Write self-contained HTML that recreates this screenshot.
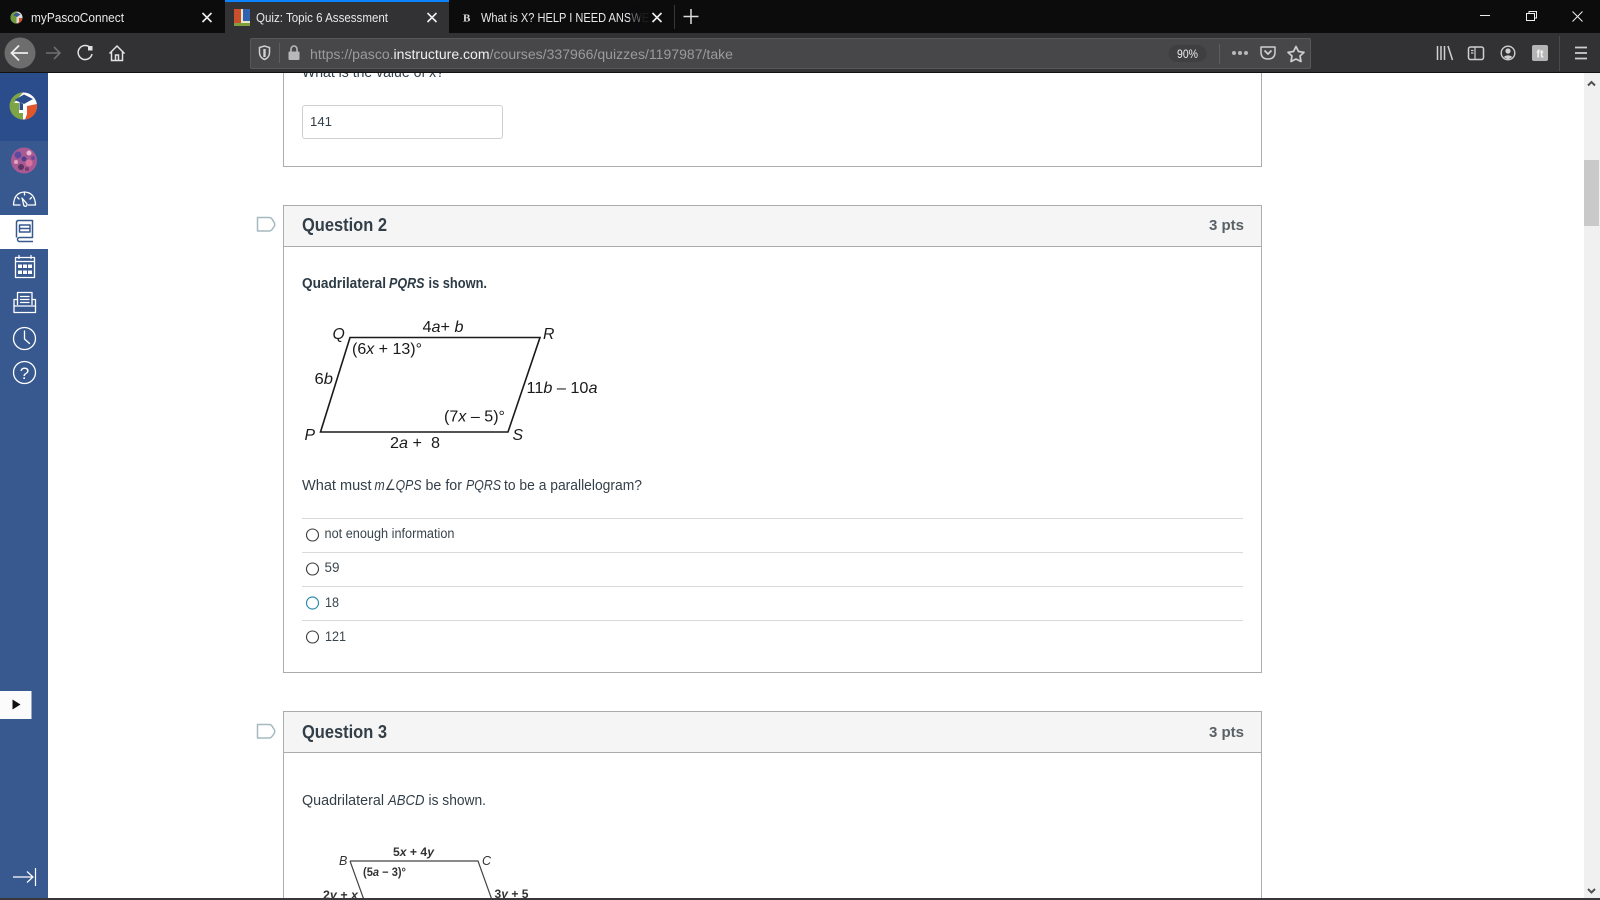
<!DOCTYPE html>
<html lang="en">
<head>
<meta charset="utf-8">
<title>Quiz: Topic 6 Assessment</title>
<style>
html,body{margin:0;padding:0;width:1600px;height:900px;overflow:hidden;background:#fff}
svg{display:block;position:absolute;left:0;top:0}
text{font-family:"Liberation Sans",Arial,sans-serif;white-space:pre}
.b{fill:#333f48;font-size:14.5px}
.bb{fill:#2d3b45;font-size:14.5px;font-weight:bold}
.h{fill:#333f48;font-size:18px;font-weight:bold}
.p{fill:#5a6166;font-size:15px;font-weight:bold}
.o{fill:#3a464e;font-size:13.5px}
.f{fill:#1a1a1a;font-size:15.8px}
.f3{fill:#333;font-size:11.5px}
.t{fill:#e8e8e8;font-size:12.5px}
</style>
</head>
<body>
<svg width="1600" height="900" viewBox="0 0 1600 900" xmlns="http://www.w3.org/2000/svg">
<rect width="1600" height="900" fill="#fff"/>

<!-- Card 1 -->
<text class="b" x="302" y="77" textLength="142" lengthAdjust="spacingAndGlyphs">What is the value of x?</text>
<path d="M283.500 70V166.500H1261.500V70" fill="none" stroke="#a9adb0"/>
<rect x="302.500" y="105.500" width="200" height="33" rx="2.500" fill="#fff" stroke="#cdd1d4"/>
<text class="b" x="310" y="126" textLength="22" lengthAdjust="spacingAndGlyphs" style="font-size:13px">141</text>

<!-- Question 2 -->
<path d="M257.500 217.500H269Q271 217.500 272 219L274.500 223Q275 224.500 274.500 226L272 229.500Q271 231 269 231H257.500Z" fill="#fff" stroke="#a6b8c0" stroke-width="1.500" stroke-linejoin="round"/>
<rect x="283.500" y="205.500" width="978" height="467" fill="#fff" stroke="#a9adb0"/>
<rect x="284" y="206" width="977" height="40.500" fill="#f5f5f5"/>
<path d="M284 246.500H1261" stroke="#a9adb0"/>
<text class="h" x="302" y="231" textLength="85" lengthAdjust="spacingAndGlyphs">Question 2</text>
<text class="p" x="1209" y="230" textLength="35" lengthAdjust="spacingAndGlyphs">3 pts</text>
<text class="bb" x="302" y="288" textLength="84" lengthAdjust="spacingAndGlyphs">Quadrilateral</text>
<text class="bb" x="389" y="288" textLength="35.500" lengthAdjust="spacingAndGlyphs" font-style="italic">PQRS</text>
<text class="bb" x="428.500" y="288" textLength="58.500" lengthAdjust="spacingAndGlyphs">is shown.</text>

<!-- Parallelogram figure -->
<path d="M350 337.500H540L508 432H320.500Z" fill="#fff" stroke="#1a1a1a" stroke-width="1.600"/>
<text class="f" x="332.500" y="339" font-style="italic">Q</text>
<text class="f" x="422.500" y="332" textLength="41" lengthAdjust="spacingAndGlyphs">4<tspan font-style="italic">a</tspan>+ <tspan font-style="italic">b</tspan></text>
<text class="f" x="543" y="339" font-style="italic">R</text>
<text class="f" x="352" y="354" textLength="70" lengthAdjust="spacingAndGlyphs">(6<tspan font-style="italic">x</tspan> + 13)°</text>
<text class="f" x="314.500" y="384" textLength="18.500" lengthAdjust="spacingAndGlyphs">6<tspan font-style="italic">b</tspan></text>
<text class="f" x="526.500" y="393" textLength="71" lengthAdjust="spacingAndGlyphs">11<tspan font-style="italic">b</tspan> – 10<tspan font-style="italic">a</tspan></text>
<text class="f" x="444" y="421.500" textLength="61" lengthAdjust="spacingAndGlyphs">(7<tspan font-style="italic">x</tspan> – 5)°</text>
<text class="f" x="304.500" y="440" font-style="italic">P</text>
<text class="f" x="512.500" y="440" font-style="italic">S</text>
<text class="f" x="390" y="448" textLength="50" lengthAdjust="spacingAndGlyphs">2<tspan font-style="italic">a</tspan> +  8</text>

<text class="b" x="302" y="490" textLength="69.500" lengthAdjust="spacingAndGlyphs">What must</text>
<text class="b" x="374.500" y="490" textLength="47" lengthAdjust="spacingAndGlyphs"><tspan font-style="italic">m</tspan>∠<tspan font-style="italic">QPS</tspan></text>
<text class="b" x="425.500" y="490" textLength="36.500" lengthAdjust="spacingAndGlyphs">be for</text>
<text class="b" x="466" y="490" textLength="35" lengthAdjust="spacingAndGlyphs" font-style="italic">PQRS</text>
<text class="b" x="504" y="490" textLength="138" lengthAdjust="spacingAndGlyphs">to be a parallelogram?</text>

<path d="M302 518.500H1243M302 552.500H1243M302 586.500H1243M302 620.500H1243" stroke="#d7dadc"/>
<circle cx="312.500" cy="535" r="6" fill="#fff" stroke="#3a3a3a" stroke-width="1.100"/>
<circle cx="312.500" cy="569" r="6" fill="#fff" stroke="#3a3a3a" stroke-width="1.100"/>
<circle cx="312.500" cy="603" r="6" fill="#fff" stroke="#2f8cad" stroke-width="1.200"/>
<circle cx="312.500" cy="637" r="6" fill="#fff" stroke="#3a3a3a" stroke-width="1.100"/>
<text class="o" x="324.500" y="538" textLength="130" lengthAdjust="spacingAndGlyphs">not enough information</text>
<text class="o" x="324.500" y="572" textLength="15" lengthAdjust="spacingAndGlyphs">59</text>
<text class="o" x="325" y="607" textLength="14" lengthAdjust="spacingAndGlyphs">18</text>
<text class="o" x="325" y="641" textLength="21" lengthAdjust="spacingAndGlyphs">121</text>

<!-- Question 3 -->
<path d="M257.500 724.500H269Q271 724.500 272 726L274.500 730Q275 731.500 274.500 733L272 736.500Q271 738 269 738H257.500Z" fill="#fff" stroke="#a6b8c0" stroke-width="1.500" stroke-linejoin="round"/>
<path d="M283.500 900V711.500H1261.500V900" fill="#fff" stroke="#a9adb0"/>
<rect x="284" y="712" width="977" height="40.500" fill="#f5f5f5"/>
<path d="M284 752.500H1261" stroke="#a9adb0"/>
<text class="h" x="302" y="738" textLength="85" lengthAdjust="spacingAndGlyphs">Question 3</text>
<text class="p" x="1209" y="737" textLength="35" lengthAdjust="spacingAndGlyphs">3 pts</text>
<text class="b" x="302" y="805" textLength="82" lengthAdjust="spacingAndGlyphs">Quadrilateral</text>
<text class="b" x="388" y="805" textLength="36.500" lengthAdjust="spacingAndGlyphs" font-style="italic">ABCD</text>
<text class="b" x="428.500" y="805" textLength="57.500" lengthAdjust="spacingAndGlyphs">is shown.</text>
<path d="M350 861H478L492 900M350 861L364 900" fill="none" stroke="#444" stroke-width="1.200"/>
<text class="f3" x="339" y="865" font-style="italic" style="font-size:12.500px">B</text>
<text class="f3" x="482" y="865" font-style="italic" style="font-size:12.500px">C</text>
<text class="f3" x="393" y="856" textLength="41" lengthAdjust="spacingAndGlyphs" font-weight="bold">5<tspan font-style="italic">x</tspan> + 4<tspan font-style="italic">y</tspan></text>
<text class="f3" x="363" y="876" textLength="43" lengthAdjust="spacingAndGlyphs" font-weight="bold">(5<tspan font-style="italic">a</tspan> − 3)°</text>
<text class="f3" x="323" y="899" textLength="35" lengthAdjust="spacingAndGlyphs" font-weight="bold">2<tspan font-style="italic">y</tspan> + <tspan font-style="italic">x</tspan></text>
<text class="f3" x="494.500" y="898" textLength="34" lengthAdjust="spacingAndGlyphs" font-weight="bold">3<tspan font-style="italic">y</tspan> + 5</text>

<!-- Scrollbar -->
<rect x="1584" y="73" width="16" height="827" fill="#f0f0f0"/>
<rect x="1584" y="160" width="15" height="66" fill="#c9c9c9"/>
<path d="M1588 85.500L1591.500 82L1595 85.500" fill="none" stroke="#505050" stroke-width="2"/>
<path d="M1588 889L1591.500 892.500L1595 889" fill="none" stroke="#505050" stroke-width="2"/>

<!-- Sidebar -->
<rect x="0" y="73" width="48" height="827" fill="#38598f"/>
<rect x="0" y="73" width="48" height="68" fill="#2c4d8c"/>
<circle cx="23.500" cy="106" r="13.500" fill="#fff"/>
<path d="M23 92.500A13.500 13.500 0 0 0 23 119.500V113H19V103H14Z" fill="#7da445"/>
<path d="M25 119.500A13.500 13.500 0 0 0 37 104L27 106V114Z" fill="#e2562c"/>
<path d="M14.500 100L24 94.500L33 99L24 104Z" fill="#2c4d8c"/>
<path d="M19.500 102V110H23V104Z" fill="#2c4d8c"/>
<circle cx="24" cy="160.500" r="13" fill="#a85a95"/>
<g>
<circle cx="18" cy="155" r="3.500" fill="#5c4aa0"/>
<circle cx="29" cy="163" r="3.500" fill="#d8739f"/>
<circle cx="21" cy="167" r="3" fill="#5a3560"/>
<circle cx="29" cy="153" r="2.500" fill="#e7b7cd"/>
<circle cx="24" cy="159" r="2.500" fill="#4c3f8f"/>
<circle cx="16" cy="162" r="2" fill="#e5a6c2"/>
<circle cx="33" cy="158" r="2" fill="#6a4a9e"/>
<circle cx="27" cy="169" r="2" fill="#7b3a73"/>
</g>

<g fill="none" stroke="#fff" stroke-width="1.300" stroke-linecap="round" stroke-linejoin="round">
<!-- dashboard -->
<path d="M20 205H13.500Q14 192.500 24.500 192Q35 192.500 35.500 205H28.500"/>
<path d="M22 198L27 204Q27.300 206.500 25 206.300Q23.500 206 23.500 204Z"/>
<path d="M17.500 197.500L19 199M24.500 193V195M31.500 197.500L30 199"/>
</g>
<rect x="0" y="215" width="48" height="34" fill="#fff"/>
<g fill="none" stroke="#38598f" stroke-width="1.500" stroke-linejoin="round">
<path d="M16.500 237.500V222.500Q16.500 220.500 18.500 220.500H32.500V237.500H19.500A2 2 0 0 0 19.500 241.500H33"/>
<path d="M19.500 225H30V232H19.500Z"/>
<path d="M19.500 228.500H30"/>
</g>
<g fill="none" stroke="#fff" stroke-width="1.300" stroke-linejoin="round" stroke-linecap="round">
<!-- calendar -->
<rect x="15.500" y="257.500" width="19" height="20"/>
<path d="M15.500 261.500H34.500M19 255.500V258.500M31 255.500V258.500"/>
</g>
<path d="M18 264.500H22V268H18ZM23 264.500H27V268H23ZM28 264.500H32V268H28ZM18 270.500H22V274H18ZM23 270.500H27V274H23ZM28 270.500H32V274H28Z" fill="#fff"/>
<g fill="none" stroke="#fff" stroke-width="1.300" stroke-linejoin="round" stroke-linecap="round">
<!-- inbox/print -->
<path d="M17.500 304.500V292.500H32V304.500"/>
<path d="M20.500 296.500H29M20.500 299.500H29M20.500 302.500H29"/>
<path d="M17.500 299.500H14V312.500H35.500V299.500H32"/>
<path d="M14 306H35.500"/>
<!-- clock -->
<circle cx="24.500" cy="338.500" r="11"/>
<path d="M24.500 331V339L29.500 343.500"/>
<!-- help -->
<circle cx="24.500" cy="372.500" r="11"/>
</g>
<text x="24.500" y="379" text-anchor="middle" fill="#fff" style="font-size:17px">?</text>

<!-- Play -->
<rect x="0" y="691" width="31.500" height="28" fill="#fbfbfb"/>
<path d="M12.500 699.500L20.500 704.500L12.500 709.500Z" fill="#111"/>

<!-- Collapse -->
<path d="M13 877H33M27 871.500L33 877L27 882.500M35.500 868V886" fill="none" stroke="#fff" stroke-width="1.200"/>

<rect x="0" y="898" width="1600" height="2" fill="#38383a"/>

<!-- Tab bar -->
<rect x="0" y="0" width="1600" height="33" fill="#0c0c0d"/>
<rect x="225" y="0" width="224" height="33" fill="#323234"/>
<rect x="225" y="0" width="224" height="2" fill="#0a84ff"/>
<!-- favicon 1 -->
<circle cx="16.500" cy="17.500" r="6" fill="#ddd"/>
<path d="M16.500 11.500A6 6 0 0 0 16.500 23.500Z" fill="#6f9a40"/>
<path d="M17 23.500A6 6 0 0 0 22.500 18L19 18V22Z" fill="#d9532a"/>
<path d="M13 15L17 12.500L20.500 14.500L17 17Z" fill="#3a5a90"/>
<text class="t" x="31" y="22" textLength="93" lengthAdjust="spacingAndGlyphs">myPascoConnect</text>
<path d="M202.500 13L211.500 22M211.500 13L202.500 22" stroke="#eee" stroke-width="1.600"/>
<!-- favicon 2 -->
<rect x="234" y="9" width="16" height="17" fill="#e9e3c9"/>
<rect x="234" y="9" width="7" height="14" fill="#c8502a"/>
<rect x="243" y="9" width="7" height="12" fill="#2f62b0"/>
<rect x="234" y="23" width="16" height="3" fill="#7ea03c"/>
<text class="t" x="256" y="22" textLength="132" lengthAdjust="spacingAndGlyphs">Quiz: Topic 6 Assessment</text>
<path d="M427.500 13L436.500 22M436.500 13L427.500 22" stroke="#eee" stroke-width="1.600"/>
<!-- favicon 3 -->
<text x="463" y="21.500" fill="#ddd" font-weight="bold" style="font-family:'Liberation Serif',serif;font-size:11px">B</text>
<text class="t" x="481" y="22" textLength="176" lengthAdjust="spacingAndGlyphs">What is X? HELP I NEED ANSWER</text>
<rect x="630" y="4" width="19" height="28" fill="#0c0c0d" opacity=".6"/>
<rect x="640" y="4" width="9" height="28" fill="#0c0c0d" opacity=".8"/>
<rect x="649" y="4" width="16" height="28" fill="#0c0c0d"/>
<path d="M652.500 13L661.500 22M661.500 13L652.500 22" stroke="#eee" stroke-width="1.600"/>
<path d="M674.500 5V29" stroke="#38383a"/>
<path d="M691 9V24M683.500 16.500H698.500" stroke="#ddd" stroke-width="1.500"/>
<!-- window controls -->
<path d="M1480 15.500H1490" stroke="#eee" stroke-width="1"/>
<path d="M1526.500 13.500H1534.500V20.500H1526.500ZM1529 13.500V11.500H1536.500V18H1534.500" fill="none" stroke="#eee"/>
<path d="M1572.500 11.500L1582.500 21.500M1582.500 11.500L1572.500 21.500" stroke="#eee"/>

<!-- Toolbar -->
<rect x="0" y="33" width="1600" height="40" fill="#323234"/>
<rect x="0" y="72" width="1600" height="1" fill="#121213"/>
<circle cx="20" cy="53" r="15.500" fill="#6d6d6e"/>
<path d="M12 53H28M19 45.500L11.500 53L19 60.500" fill="none" stroke="#ececec" stroke-width="1.800"/>
<path d="M46 53H60M54 47L60 53L54 59" fill="none" stroke="#6f6f71" stroke-width="1.600"/>
<path d="M90.500 48A7 7 0 1 0 92 54" fill="none" stroke="#e2e2e2" stroke-width="1.500"/>
<path d="M88 46H92.500V50.500H88Z" fill="#e2e2e2"/>
<path d="M109.500 53.500L117 46L124.500 53.500M111.500 52V60.500H122.500V52M115.500 60.500V55H118.500V60.500" fill="none" stroke="#e2e2e2" stroke-width="1.500"/>

<!-- URL bar -->
<rect x="250.500" y="38.500" width="1060" height="30" rx="1.500" fill="#474749" stroke="#58585a"/>
<path d="M259.500 47.500L264.500 46L269.500 47.500V52.500Q269.500 57.500 264.500 59.500Q259.500 57.500 259.500 52.500Z" fill="none" stroke="#d0d0d0" stroke-width="1.500"/>
<path d="M264.500 49V57" stroke="#d0d0d0" stroke-width="2.400"/>
<path d="M279.500 43V63" stroke="#5d5d5f"/>
<rect x="288.500" y="51.500" width="11" height="8.500" rx="1" fill="#b8b8b8"/>
<path d="M291 52V49A3 3 0 0 1 297 49V52" fill="none" stroke="#b8b8b8" stroke-width="1.600"/>
<text x="310" y="59" textLength="423" lengthAdjust="spacingAndGlyphs" fill="#9b9b9d" style="font-size:13.500px">https://pasco.<tspan fill="#f0f0f0">instructure.com</tspan>/courses/337966/quizzes/1197987/take</text>
<rect x="1168.500" y="45" width="38" height="17" rx="8.500" fill="#3f3f41"/>
<text x="1177" y="58" fill="#ececec" textLength="21" lengthAdjust="spacingAndGlyphs" style="font-size:11.500px">90%</text>
<path d="M1219.500 44V64" stroke="#5d5d5f"/>
<circle cx="1234" cy="53" r="2" fill="#b8b8b8"/><circle cx="1240" cy="53" r="2" fill="#b8b8b8"/><circle cx="1246" cy="53" r="2" fill="#b8b8b8"/>
<path d="M1261 47H1275V52Q1275 59 1268 59Q1261 59 1261 52Z" fill="none" stroke="#cfcfcf" stroke-width="1.500" stroke-linejoin="round"/>
<path d="M1264.500 50.500L1268 54L1271.500 50.500" fill="none" stroke="#cfcfcf" stroke-width="1.700"/>
<path d="M1296 46.500L1298.500 51.500L1304 52.300L1300 56L1301 61.500L1296 59L1291 61.500L1292 56L1288 52.300L1293.500 51.500Z" fill="none" stroke="#cfcfcf" stroke-width="1.700" stroke-linejoin="round"/>

<!-- Right toolbar -->
<path d="M1437.500 46V60M1441 46V60M1444.500 46V60M1448 46L1452.500 60" fill="none" stroke="#cfcfcf" stroke-width="1.500"/>
<rect x="1468.500" y="47" width="15" height="12.500" rx="2" fill="none" stroke="#cfcfcf" stroke-width="1.500"/>
<path d="M1475 47V59.500M1471 50.500H1473.500M1471 53H1473.500" stroke="#cfcfcf" stroke-width="1.200"/>
<circle cx="1508" cy="53" r="6.800" fill="none" stroke="#cfcfcf" stroke-width="1.400"/>
<circle cx="1508" cy="51" r="2.600" fill="#cfcfcf"/>
<path d="M1503.500 57Q1508 53.500 1512.500 57L1508 59.500Z" fill="#cfcfcf"/>
<rect x="1532" y="45" width="16" height="16" rx="2" fill="#b4b4b4"/>
<text x="1540" y="57.500" text-anchor="middle" fill="#f4f4f4" font-weight="bold" style="font-size:11px">ft</text>
<path d="M1559.500 36V71" stroke="#4a4a4c"/>
<path d="M1575 47.500H1587M1575 53H1587M1575 58.500H1587" stroke="#cfcfcf" stroke-width="1.800"/>
</svg>
</body>
</html>
